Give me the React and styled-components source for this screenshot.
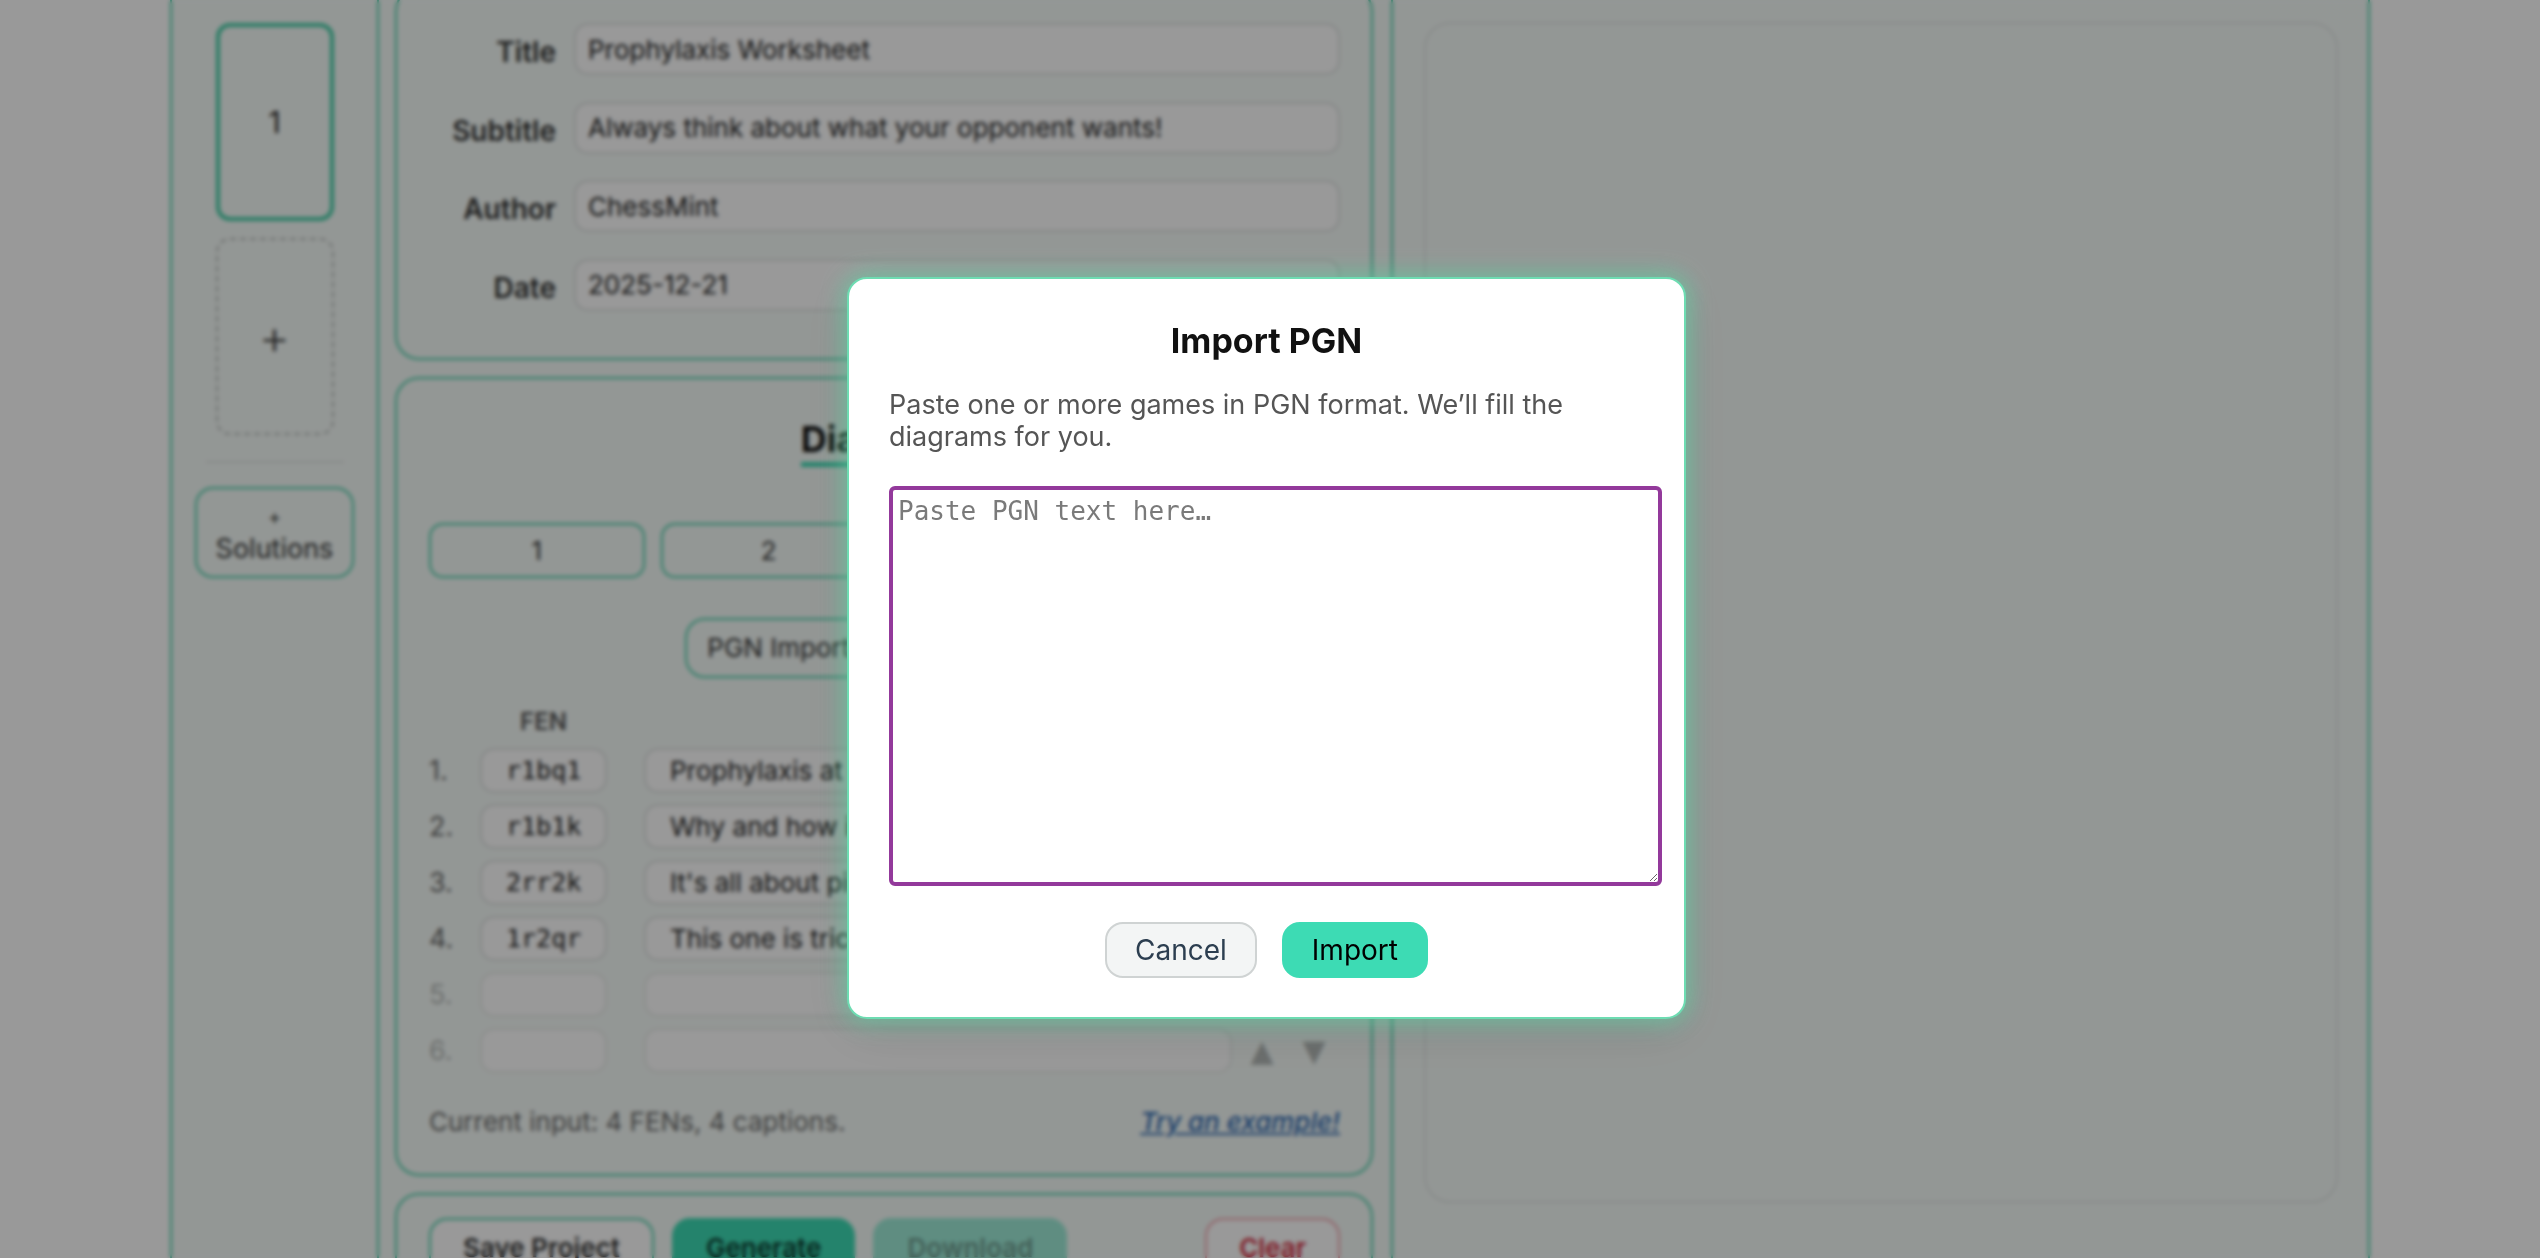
import styled, { createGlobalStyle } from 'styled-components'

const teal = '#3ddbb4'
const tealLine = '#45cfa8'

const GlobalStyle = createGlobalStyle`
  html, body {
    margin: 0;
    background: #fff;
    overflow: hidden;
  }
  body {
    font-family: Inter, "Noto Sans", sans-serif;
    color: #222;
  }
  * {
    box-sizing: border-box;
  }
`

const Shell = styled.div`
  width: 2200px;
  min-height: 1400px;
  margin: -40px auto 0;
  border: 2px solid ${tealLine};
  background: #f6fcf9;
  display: grid;
  grid-template-columns: 207px 1fr 977px;
`

const Sidebar = styled.aside`
  border-right: 2px solid ${tealLine};
  padding-top: 61px;
  display: flex;
  flex-direction: column;
  align-items: center;
`

const SlideCard = styled.div`
  width: 118px;
  height: 198px;
  border-radius: 14px;
  display: flex;
  align-items: center;
  justify-content: center;
  font-size: 30px;
  color: #222;
  border: ${p => (p.$add ? '2px dashed #b9bebc' : `4px solid ${tealLine}`)};
  margin-top: ${p => (p.$add ? '17px' : '0')};
  font-weight: ${p => (p.$add ? 300 : 400)};
  ${p => p.$add && 'font-size: 48px; color: #444; height: 197px;'}
`

const Divider = styled.div`
  width: 138px;
  height: 2px;
  background: #e1e6e4;
  margin-top: 26px;
`

const SolutionsButton = styled.button`
  margin-top: 24px;
  width: 159px;
  height: 91px;
  border: 2px solid ${tealLine};
  border-radius: 18px;
  background: transparent;
  font-family: inherit;
  font-size: 27px;
  line-height: 31px;
  color: #333;
  display: flex;
  flex-direction: column;
  align-items: center;
  justify-content: center;
  span:first-child {
    font-size: 20px;
  }
`

const Middle = styled.main`
  padding: 25px 18px 40px 16px;
  display: flex;
  flex-direction: column;
  gap: 17px;
`

const Card = styled.section`
  border: 2px solid ${tealLine};
  border-radius: 24px;
  padding: ${p => p.$pad || '40px 31px 36px 32px'};
`

const MetaGrid = styled.div`
  display: grid;
  grid-template-columns: 127px 1fr;
  column-gap: 18px;
  row-gap: 26.5px;
  align-items: center;
`

const Label = styled.label`
  text-align: right;
  font-size: 28px;
  font-weight: 600;
  color: #333;
  padding-top: 6px;
`

const TextInput = styled.input`
  height: ${p => p.$h || '52px'};
  width: 100%;
  border: 2px solid ${p => (p.$empty ? '#e8ecea' : '#dfe3e1')};
  border-radius: 14px;
  padding: 0 ${p => p.$px || '12px'};
  background: #fff;
  font-family: ${p => (p.$mono ? '"DejaVu Sans Mono", "Liberation Mono", monospace' : 'inherit')};
  font-size: ${p => (p.$mono ? '25px' : '26px')};
  color: #222;
  outline: none;
`

const HeadingWrap = styled.div`
  text-align: center;
`

const Heading = styled.h2`
  display: inline-block;
  margin: 0;
  font-size: 36px;
  line-height: 40px;
  font-weight: 700;
  color: #111;
  padding-bottom: 3px;
  border-bottom: 5px solid ${teal};
`

const Tabs = styled.div`
  margin-top: 56px;
  display: grid;
  grid-template-columns: repeat(4, 1fr);
  gap: 16px;
`

const OutlineButton = styled.button`
  height: ${p => p.$h || '55px'};
  padding: 0 ${p => p.$px || '20px'};
  border: 2px solid ${tealLine};
  border-radius: ${p => p.$r || '14px'};
  background: transparent;
  font-family: inherit;
  font-size: 26px;
  color: #333;
`

const ImportRow = styled.div`
  margin-top: 40px;
  display: flex;
  justify-content: center;
  gap: 16px;
`

const FenHeader = styled.div`
  margin-top: 29px;
  margin-left: 51px;
  width: 127px;
  text-align: center;
  font-size: 24px;
  line-height: 30px;
  font-weight: 600;
  color: #555;
`

const Rows = styled.div`
  margin-top: 11px;
  display: flex;
  flex-direction: column;
  gap: 11px;
`

const Row = styled.div`
  display: flex;
  align-items: center;
`

const RowNum = styled.span`
  width: 51px;
  font-size: 27px;
  color: ${p => (p.$empty ? '#b5b9b7' : '#666')};
`

const FenCell = styled.div`
  width: 127px;
`

const CaptionCell = styled.div`
  flex: 1;
  margin-left: 37px;
`

const Arrow = styled.button`
  width: 52px;
  height: 45px;
  border: none;
  background: none;
  font-family: "DejaVu Sans", sans-serif;
  font-size: 30px;
  color: #b3b8b6;
  padding: 0;
  margin-left: ${p => (p.$first ? '4px' : '0')};
`

const Footer = styled.div`
  margin-top: 33px;
  display: flex;
  justify-content: space-between;
  align-items: baseline;
  font-size: 26px;
  line-height: 32px;
  color: #666;
`

const ExampleLink = styled.a`
  color: #2a66b0;
  font-style: italic;
  font-weight: 500;
  text-decoration: underline;
`

const ActionRow = styled.div`
  display: flex;
  gap: 18px;
`

const ActionButton = styled.button`
  height: 60px;
  padding: 0 32px;
  border-radius: 18px;
  font-family: inherit;
  font-size: 26px;
  font-weight: 600;
  border: 2px solid ${p => p.$border};
  background: ${p => p.$bg};
  color: ${p => p.$color};
  margin-left: ${p => (p.$push ? 'auto' : '0')};
`

const RightPane = styled.aside`
  border-left: 2px solid ${tealLine};
  padding: 60px 30px 0 31px;
`

const Preview = styled.div`
  height: 1181px;
  border: 2px solid #e3e8e6;
  border-radius: 26px;
`

const Overlay = styled.div`
  position: fixed;
  inset: 0;
  background: rgba(0, 0, 0, 0.4);
  backdrop-filter: blur(2px);
  display: flex;
  justify-content: center;
  align-items: center;
  padding: 37px 7px 0 0;
`

const Modal = styled.div`
  width: 839px;
  background: #fff;
  border: 2px solid #6edcb2;
  border-radius: 20px;
  padding: 40px 40px 39px;
  box-shadow: 0 0 22px 4px rgba(90, 226, 172, 0.55), 0 12px 50px rgba(0, 0, 0, 0.12);
`

const ModalTitle = styled.h2`
  margin: 0;
  text-align: center;
  font-size: 34px;
  line-height: 44px;
  font-weight: 700;
  color: #111;
`

const ModalText = styled.p`
  margin: 26px 0 0;
  font-size: 27px;
  line-height: 32px;
  color: #555;
`

const PgnArea = styled.textarea`
  display: block;
  box-sizing: content-box;
  width: 100%;
  height: 382px;
  margin-top: 33px;
  padding: 5px;
  border: 4px solid #93399b;
  border-radius: 6px;
  outline: none;
  font-family: "DejaVu Sans Mono", "Liberation Mono", monospace;
  font-size: 26px;
  line-height: 32px;
  color: #222;
  &::placeholder {
    color: #7a7a7a;
  }
`

const ModalActions = styled.div`
  margin-top: 36px;
  display: flex;
  justify-content: center;
  gap: 25px;
`

const ModalButton = styled.button`
  height: 56px;
  padding: 0 28px;
  border-radius: 18px;
  font-family: inherit;
  font-size: 28px;
  border: 2px solid ${p => (p.$primary ? teal : '#cfd3d3')};
  background: ${p => (p.$primary ? teal : '#f3f5f5')};
  color: ${p => (p.$primary ? '#000' : '#2c3e50')};
`

const meta = [
  ['Title', 'Prophylaxis Worksheet'],
  ['Subtitle', 'Always think about what your opponent wants!'],
  ['Author', 'ChessMint'],
  ['Date', '2025-12-21'],
]

const diagrams = [
  ['r1bq1rk1/pp2bppp/2n1pn2/3p4/2PP4/2N1PN2/PP2BPPP/R2QKB1R w KQ - 0 8', 'Prophylaxis at its finest'],
  ['r1b1k2r/pp1n1ppp/2p1p3/q7/1bPP4/2N1PN2/PP1B1PPP/R2QKB1R w KQkq - 2 9', 'Why and how is this move played?'],
  ['2rr2k1/pp3ppp/2n1bn2/q3p3/4P3/P1N1BN1P/1PQ2PP1/2RR2K1 w - - 0 18', "It's all about piece activity"],
  ['1r2qrk1/p4ppp/2pb1n2/3p4/3P4/2NBP3/PP3PPP/R2Q1RK1 w - - 0 14', 'This one is tricky, take your time'],
  ['', ''],
  ['', ''],
]

export default function App() {
  return (
    <>
      <GlobalStyle />
      <Shell>
        <Sidebar>
          <SlideCard>1</SlideCard>
          <SlideCard $add>+</SlideCard>
          <Divider />
          <SolutionsButton>
            <span>+</span>
            <span>Solutions</span>
          </SolutionsButton>
        </Sidebar>

        <Middle>
          <Card $pad="34px 31px 47px 32px">
            <MetaGrid>
              {meta.map(([label, value]) => (
                <>
                  <Label key={label + 'l'}>{label}</Label>
                  <TextInput key={label + 'i'} defaultValue={value} />
                </>
              ))}
            </MetaGrid>
          </Card>

          <Card>
            <HeadingWrap>
              <Heading>Diagrams</Heading>
            </HeadingWrap>
            <Tabs>
              {['1', '2', '3', '4'].map(t => (
                <OutlineButton key={t}>{t}</OutlineButton>
              ))}
            </Tabs>
            <ImportRow>
              <OutlineButton $h="60px" $r="20px">PGN Import</OutlineButton>
              <OutlineButton $h="60px" $r="20px">Board Editor</OutlineButton>
            </ImportRow>
            <FenHeader>FEN</FenHeader>
            <Rows>
              {diagrams.map(([fen, caption], i) => (
                <Row key={i}>
                  <RowNum $empty={!fen}>{i + 1}.</RowNum>
                  <FenCell>
                    <TextInput $mono $h="45px" $px="24px" $empty={!fen} defaultValue={fen} />
                  </FenCell>
                  <CaptionCell>
                    <TextInput $h="45px" $px="24px" $empty={!fen} defaultValue={caption} />
                  </CaptionCell>
                  <Arrow $first>▲</Arrow>
                  <Arrow>▼</Arrow>
                </Row>
              ))}
            </Rows>
            <Footer>
              <span>Current input: 4 FENs, 4 captions.</span>
              <ExampleLink href="#">Try an example!</ExampleLink>
            </Footer>
          </Card>

          <Card $pad="23px 31px 36px 32px">
            <ActionRow>
              <ActionButton $border={tealLine} $bg="#fff" $color="#333">Save Project</ActionButton>
              <ActionButton $border={teal} $bg={teal} $color="#0b3a2f">Generate</ActionButton>
              <ActionButton $border="#9eecd8" $bg="#9eecd8" $color="#6e9d90">Download</ActionButton>
              <ActionButton $push $border="#f2a3ad" $bg="#fff" $color="#d3283c">Clear</ActionButton>
            </ActionRow>
          </Card>
        </Middle>

        <RightPane>
          <Preview />
        </RightPane>
      </Shell>

      <Overlay>
        <Modal>
          <ModalTitle>Import PGN</ModalTitle>
          <ModalText>Paste one or more games in PGN format. We’ll fill the diagrams for you.</ModalText>
          <PgnArea placeholder="Paste PGN text here…" />
          <ModalActions>
            <ModalButton>Cancel</ModalButton>
            <ModalButton $primary>Import</ModalButton>
          </ModalActions>
        </Modal>
      </Overlay>
    </>
  )
}
